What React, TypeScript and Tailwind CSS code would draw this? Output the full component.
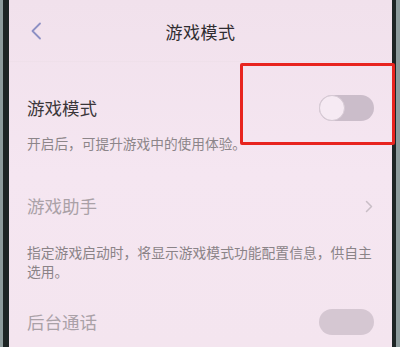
const font = { fontFamily: '"Noto Sans CJK SC", "Noto Sans", sans-serif' };

const Toggle = ({ disabled = false }: { disabled?: boolean }) => (
  <div
    className={`relative h-[26px] w-[55px] rounded-full ${
      disabled ? 'bg-[#d5c7d2]' : 'bg-[#cbbdca]'
    }`}
  >
    {!disabled && (
      <div className="absolute left-0 top-0 h-[26px] w-[26px] rounded-full border border-[#d6cad4] bg-[#f6eaf3]" />
    )}
  </div>
);

export default function App() {
  return (
    <div className="relative flex h-[347px] w-[400px] overflow-hidden bg-[#f3e5ef]" style={font}>
      {/* left bezel */}
      <div className="w-[3px] bg-[#8d9b9c]" />
      <div className="w-[6px] bg-[#1d2424]" />

      {/* screen */}
      <div className="flex flex-1 flex-col bg-gradient-to-b from-[#f1e1ec] via-[#f5e6f1] to-[#f4e5ef]">
        {/* header */}
        <div className="relative flex h-[62px] items-center justify-center border-b border-[#efe0ea]">
          <svg
            className="absolute left-[21px] top-[22px]"
            width="12"
            height="18"
            viewBox="0 0 12 18"
            fill="none"
          >
            <path d="M10 1.5 2.5 9l7.5 7.5" stroke="#8d90c4" strokeWidth="1.8" strokeLinecap="round" strokeLinejoin="round" />
          </svg>
          <span className="pt-[2px] text-[17px] tracking-[0.5px] text-[#2f2c30]">游戏模式</span>
        </div>

        {/* 游戏模式 */}
        <div className="flex items-center justify-between pl-[18px] pr-[18px] pt-[33px]">
          <span className="text-[17.5px] text-[#3a3639]">游戏模式</span>
          <Toggle />
        </div>
        <p className="pl-[18px] pt-[13px] text-[13.7px] leading-[19px] text-[#8c8589]">
          开启后，可提升游戏中的使用体验。
        </p>

        {/* 游戏助手 */}
        <div className="flex items-center justify-between pl-[18px] pr-[19px] pt-[40px]">
          <span className="text-[17.5px] text-[#aaa1a7]">游戏助手</span>
          <svg width="8" height="13" viewBox="0 0 8 13" fill="none">
            <path d="M1.5 1.5 6.5 6.5l-5 5" stroke="#c9bec6" strokeWidth="1.5" strokeLinecap="round" strokeLinejoin="round" />
          </svg>
        </div>
        <p className="pl-[18px] pr-[10px] pt-[23px] text-[13.8px] leading-[19px] text-[#8a8387]">
          指定游戏启动时，将显示游戏模式功能配置信息，供自主
          <br />
          选用。
        </p>

        {/* 后台通话 */}
        <div className="flex items-center justify-between pl-[18px] pr-[18px] pt-[28px]">
          <span className="text-[17.5px] text-[#aaa1a7]">后台通话</span>
          <Toggle disabled />
        </div>
      </div>

      {/* right bezel */}
      <div className="w-[4px] bg-[#1d2424]" />
      <div className="w-[4px] bg-[#8d9b9c]" />

      {/* red highlight box */}
      <div className="absolute left-[240px] top-[63px] h-[82px] w-[155px] rounded-[2px] border-[3px] border-[#e8241f]" />
    </div>
  );
}
